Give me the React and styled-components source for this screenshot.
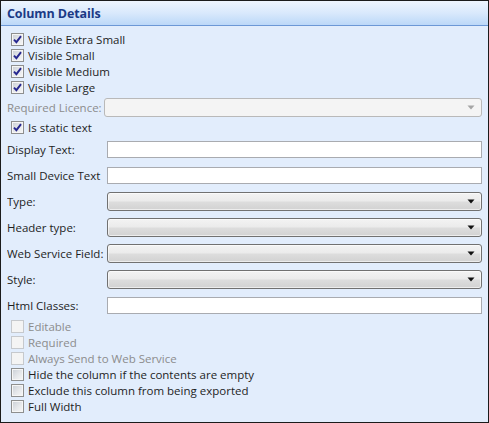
import React from 'react';
import styled, { createGlobalStyle } from 'styled-components';

const GlobalStyle = createGlobalStyle`
  html, body {
    margin: 0;
    padding: 0;
    background: #ffffff;
  }
  * { box-sizing: border-box; }
`;

const Panel = styled.section`
  width: 489px;
  height: 423px;
  border: 1px solid #1b1b1b;
  background: #e2edfc;
  display: flex;
  flex-direction: column;
  font-family: 'Open Sans', 'Noto Sans', sans-serif;
  font-size: 11.5px;
  color: #1e1e1e;
`;

const Header = styled.header`
  height: 25px;
  flex-shrink: 0;
  display: flex;
  align-items: center;
  padding-left: 6px;
  background: linear-gradient(to bottom, #eef5fe 0%, #d9e9fc 50%, #bcd8f8 100%);
  border-bottom: 1px solid #6c98d6;
`;

const Title = styled.h2`
  margin: 0;
  font-size: 12.5px;
  font-weight: bold;
  color: #1b3a86;
  letter-spacing: -0.1px;
`;

const Body = styled.div`
  display: flex;
  flex-direction: column;
  padding: 5px 6px 0 6px;
`;

const CheckRow = styled.label`
  height: 16px;
  display: flex;
  align-items: center;
  gap: 4px;
  padding-left: 4px;
  color: ${p => (p.disabled ? '#8c8c8c' : '#1e1e1e')};
  white-space: nowrap;
`;

const Box = styled.span`
  width: 13px;
  height: 13px;
  flex-shrink: 0;
  display: flex;
  align-items: center;
  justify-content: center;
  border: 1px solid ${p => (p.disabled ? '#c6c9cd' : '#8e8f8f')};
  background: ${p =>
    p.disabled
      ? '#f4f4f4'
      : 'linear-gradient(135deg, #c9ced5 0%, #e6e8eb 55%, #f8f8f8 100%)'};
  box-shadow: inset 0 0 0 1px ${p => (p.disabled ? '#f4f4f4' : '#f6f6f6')};
`;

const FormRow = styled.div`
  height: ${p => p.h || 26}px;
  display: flex;
  align-items: center;
  margin-top: ${p => p.mt || 0}px;
`;

const Label = styled.span`
  width: ${p => p.w || 100}px;
  flex-shrink: 0;
  white-space: nowrap;
  overflow: hidden;
  color: ${p => (p.disabled ? '#8c8c8c' : '#1e1e1e')};
`;

const TextBox = styled.input`
  flex: 1;
  height: 17px;
  border: 1px solid #a9abb0;
  background: #ffffff;
  padding: 0 3px;
  font: inherit;
  outline: none;
`;

const Combo = styled.div`
  flex: 1;
  height: 19px;
  border: 1px solid ${p => (p.disabled ? '#b9b9b9' : '#717171')};
  border-radius: 3px;
  background: ${p =>
    p.disabled
      ? '#f4f4f4'
      : 'linear-gradient(to bottom, #f3f3f3 0%, #ebebeb 48%, #dddddd 52%, #d2d2d2 100%)'};
  box-shadow: inset 0 0 0 1px ${p => (p.disabled ? '#f4f4f4' : 'rgba(255,255,255,0.6)')};
  display: flex;
  align-items: center;
  justify-content: flex-end;
  padding-right: 6px;
`;

const Check = () => (
  <svg width="9" height="9" viewBox="0 0 9 9">
    <path d="M1 4.6 L3.4 7.2 L8 1.2" fill="none" stroke="#26278f" strokeWidth="1.9" strokeLinejoin="miter" />
  </svg>
);

const Arrow = ({ disabled }) => (
  <svg width="8" height="5" viewBox="0 0 8 5">
    <path d="M0.5 0.5 H7.5 L4 4.5 Z" fill={disabled ? '#a5a5a5' : '#111111'} />
  </svg>
);

const CheckItem = ({ label, checked, disabled }) => (
  <CheckRow disabled={disabled}>
    <Box disabled={disabled}>{checked && <Check />}</Box>
    {label}
  </CheckRow>
);

const TextField = ({ label, mt }) => (
  <FormRow mt={mt}>
    <Label>{label}</Label>
    <TextBox type="text" />
  </FormRow>
);

const SelectField = ({ label }) => (
  <FormRow>
    <Label>{label}</Label>
    <Combo>
      <Arrow />
    </Combo>
  </FormRow>
);

const topChecks = ['Visible Extra Small', 'Visible Small', 'Visible Medium', 'Visible Large'];

const bottomChecks = [
  { label: 'Editable', disabled: true },
  { label: 'Required', disabled: true },
  { label: 'Always Send to Web Service', disabled: true },
  { label: 'Hide the column if the contents are empty' },
  { label: 'Exclude this column from being exported' },
  { label: 'Full Width' },
];

const App = () => (
  <>
    <GlobalStyle />
    <Panel>
      <Header>
        <Title>Column Details</Title>
      </Header>
      <Body>
        {topChecks.map(t => (
          <CheckItem key={t} label={t} checked />
        ))}
        <FormRow h={24}>
          <Label w={97} disabled>Required Licence:</Label>
          <Combo disabled>
            <Arrow disabled />
          </Combo>
        </FormRow>
        <CheckItem label="Is static text" checked />
        <TextField label="Display Text:" mt={1} />
        <TextField label="Small Device Text" />
        <SelectField label="Type:" />
        <SelectField label="Header type:" />
        <SelectField label="Web Service Field:" />
        <SelectField label="Style:" />
        <TextField label="Html Classes:" />
        {bottomChecks.map(c => (
          <CheckItem key={c.label} label={c.label} disabled={c.disabled} />
        ))}
      </Body>
    </Panel>
  </>
);

export default App;
